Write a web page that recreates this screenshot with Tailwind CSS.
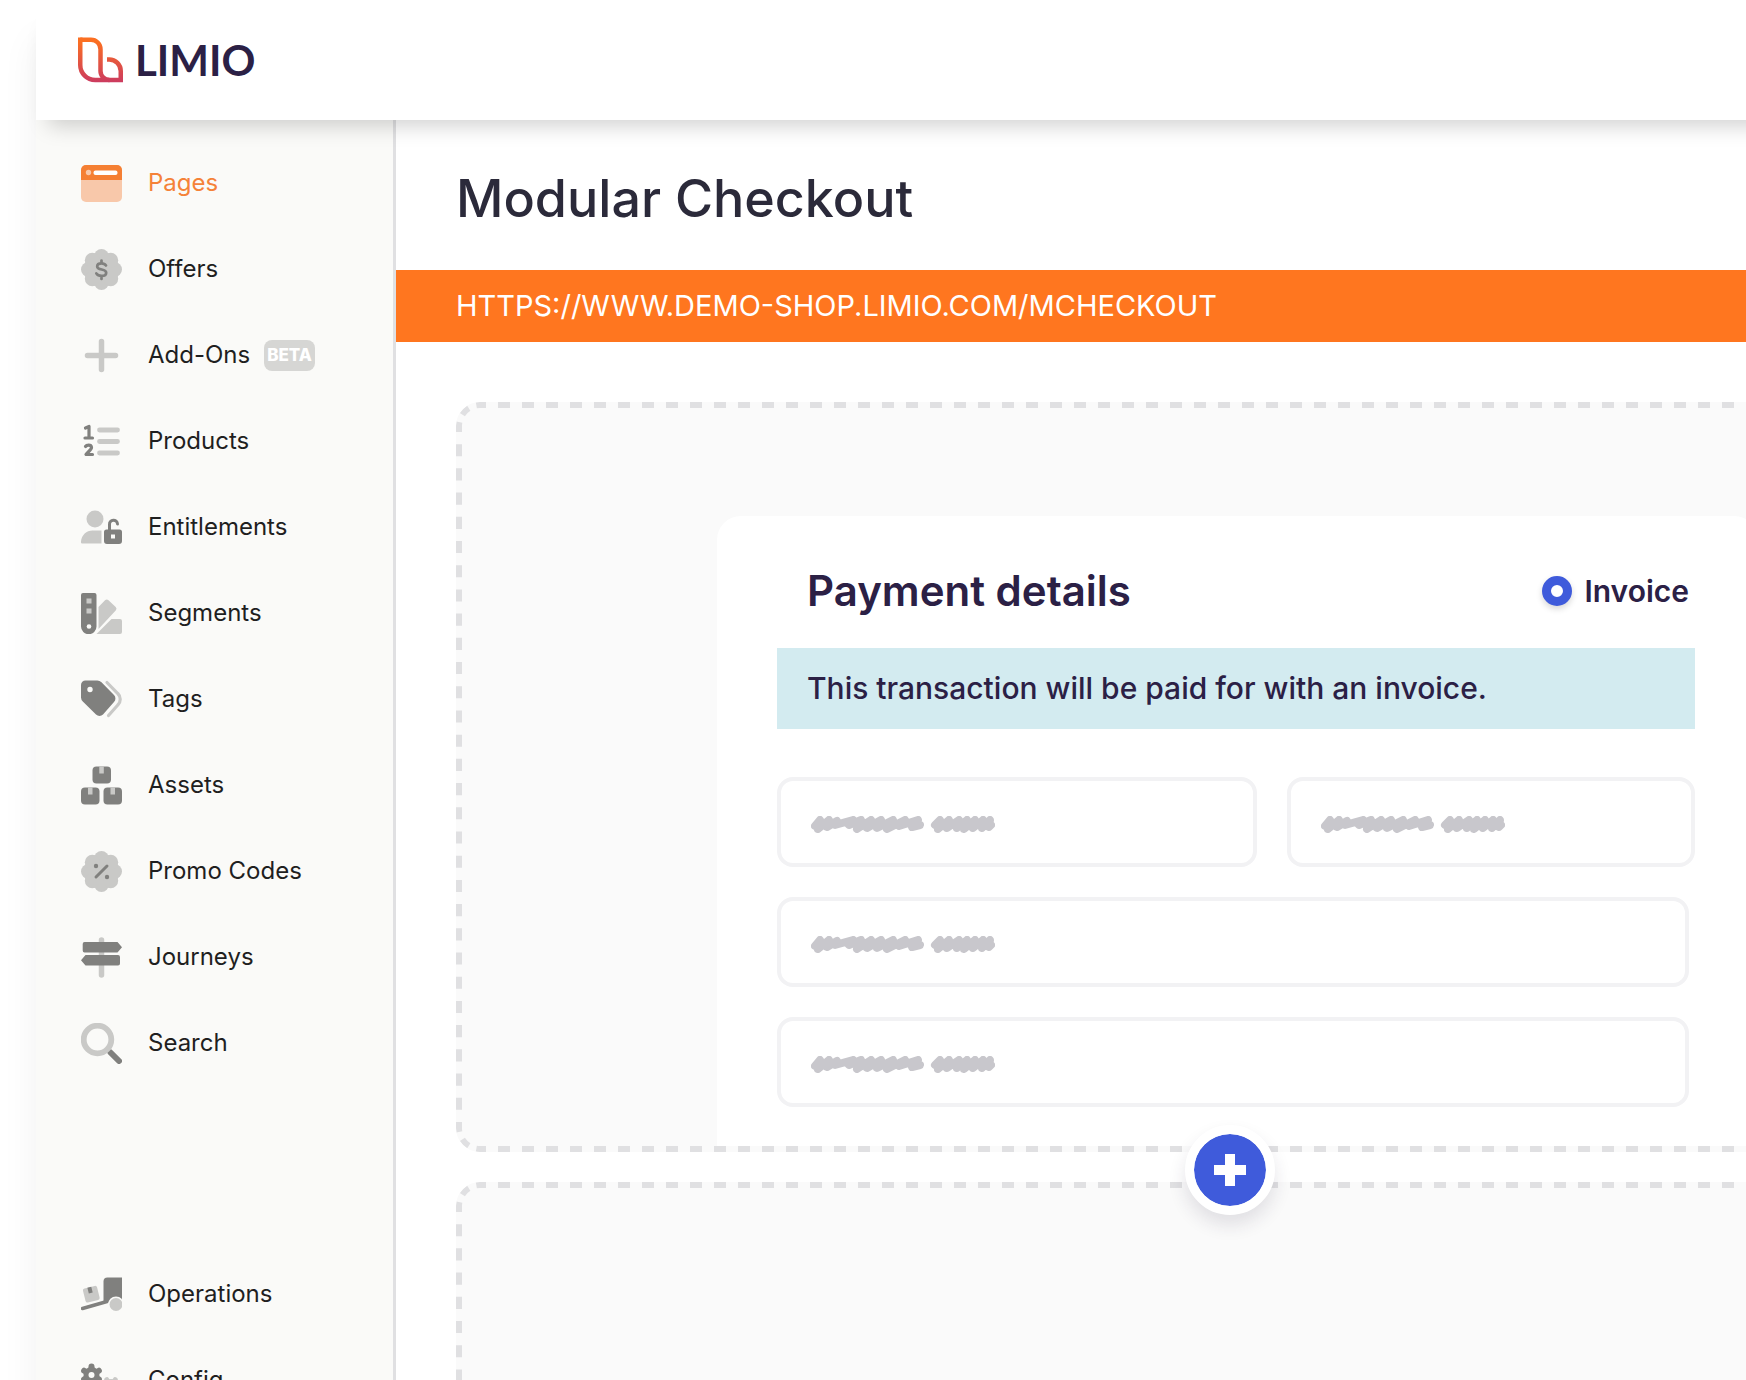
<!DOCTYPE html>
<html lang="en">
<head>
<meta charset="utf-8">
<title>Limio – Modular Checkout</title>
<script src="https://cdn.jsdelivr.net/npm/@tailwindcss/browser@4"></script>
</head>
<body class="bg-white font-[Inter,sans-serif]">

<!-- Shared drawings -->
<svg class="hidden" aria-hidden="true">
  <symbol id="scribble" viewBox="0 0 184 17">
    <g fill="none" stroke="#c8c7cc" stroke-width="8" stroke-linecap="round" stroke-linejoin="round">
      <path d="M4 10 9 4 7 13 18 4 16 11 26 5 24 9 42 4 38 9 50 4 46 13 60 4 56 12 70 4 66 12 82 4 76 13 94 4 88 10 107 4 102 8 109 9 101 11"/>
      <path d="M124 9 129 4 127 13 138 4 136 12 148 4 146 12 156 4 153 13 164 4 162 12 172 4 171 12 179 4 178 11 180 9"/>
    </g>
  </symbol>
  <symbol id="seal" viewBox="0 0 41 41">
    <g fill="#c9c9c7"><circle cx="20.500" cy="20.500" r="17.500"/><circle cx="20.500" cy="7.500" r="7.500"/><circle cx="20.500" cy="33.500" r="7.500"/><circle cx="7.500" cy="20.500" r="7.500"/><circle cx="33.500" cy="20.500" r="7.500"/><circle cx="11.300" cy="11.300" r="7.500"/><circle cx="29.700" cy="11.300" r="7.500"/><circle cx="11.300" cy="29.700" r="7.500"/><circle cx="29.700" cy="29.700" r="7.500"/></g>
  </symbol>
</svg>

<div class="h-screen overflow-hidden pl-9">
<div class="flex h-full flex-col shadow-[0_40px_36px_rgba(0,0,0,0.06)]">

  <header class="relative z-20 -mr-10 flex h-[120px] shrink-0 items-center bg-white pl-[42px] shadow-[0_18px_20px_-12px_rgba(0,0,0,0.18)]">
    <a href="#" class="flex items-center gap-3" aria-label="Limio home">
      <svg class="h-[46px] w-[45px]" viewBox="0 0 45 46" fill="none" stroke="url(#lg)" stroke-width="4.500">
        <defs><linearGradient id="lg" gradientUnits="userSpaceOnUse" x1="0" y1="0" x2="0" y2="46"><stop offset=".1" stop-color="#fb6f22"/><stop offset="1" stop-color="#cb3a60"/></linearGradient></defs>
        <path d="M2.250 2.750H13a9.500 9.500 0 0 1 9.500 9.500V34a9 9 0 0 0 9 9"/>
        <path d="M2.250 .5V28a15 15 0 0 0 15 15H42.750V34a11.500 11.500 0 0 0-11.500-11.500H29"/>
      </svg>
      <span class="font-[Lato,sans-serif] text-[42px] leading-[46px] font-bold text-[#2b2045]">LIMIO</span>
    </a>
  </header>

  <div class="flex min-h-0 flex-1">

    <nav class="w-[360px] shrink-0 overflow-hidden border-r-[3px] border-[#e0e0e2] bg-[#fafaf8] pt-5 text-[24px] leading-8 text-[#1f1f1f]">
      <ul>
        <li><a href="#" aria-current="page" class="flex h-[86px] items-center gap-[26px] pl-[45px] text-[#f58238]">
          <svg class="size-[41px]" viewBox="0 0 41 41"><rect y="2" width="41" height="37" rx="5" fill="#f8c8aa"/><path d="M0 17V7a5 5 0 0 1 5-5H36a5 5 0 0 1 5 5V17Z" fill="#f57f33"/><circle cx="7.500" cy="9.500" r="2.700" fill="#f8c8aa"/><rect x="12.500" y="7.500" width="24" height="4.500" rx="2" fill="#fff"/></svg>
          Pages</a></li>
        <li><a href="#" class="flex h-[86px] items-center gap-[26px] pl-[45px]">
          <svg class="size-[41px]" viewBox="0 0 41 41"><use href="#seal"/><path d="M25 16.500c-1-1.500-2.600-2.200-4.500-2.200-2.600 0-4.300 1.200-4.300 3.100 0 4.300 9 2 9 6.300 0 2-1.900 3.200-4.700 3.200-2.200 0-4.200-.8-5.200-2.500M20.500 11.500v3M20.500 27v3" fill="none" stroke="#80807e" stroke-width="2.700" stroke-linecap="round"/></svg>
          Offers</a></li>
        <li><a href="#" class="flex h-[86px] items-center gap-[26px] pl-[45px]">
          <svg class="size-[41px]" viewBox="0 0 41 41"><path d="M20.500 6.500v28M6.500 20.500h28" stroke="#c9c9c7" stroke-width="5.500" stroke-linecap="round"/></svg>
          Add-Ons
          <span class="-ml-3 rounded-lg bg-[#d6d6d4] px-[3px] text-[17px] leading-[31px] font-extrabold text-white">BETA</span></a></li>
        <li><a href="#" class="flex h-[86px] items-center gap-[26px] pl-[45px]">
          <svg class="size-[41px]" viewBox="0 0 41 41"><path d="M18.500 9H36.500M18.500 20.500H36.500M18.500 32H36.500" stroke="#c9c9c7" stroke-width="4.800" stroke-linecap="round"/><path d="M4.500 7 8 5.500V17M4 17h7.500M4.500 25.500c1-1.500 5.500-2.300 6 .8.200 2.200-3.500 4.500-5.500 7.200h6.500" fill="none" stroke="#80807e" stroke-width="3.200" stroke-linecap="round" stroke-linejoin="round"/></svg>
          Products</a></li>
        <li><a href="#" class="flex h-[86px] items-center gap-[26px] pl-[45px]">
          <svg class="size-[41px]" viewBox="0 0 41 41"><circle cx="14" cy="12" r="8.500" fill="#c9c9c7"/><path d="M0 34.500C.5 28 5.500 23.500 11.500 23.500H20.500V36.500H1.500A1.500 1.500 0 0 1 0 34.500Z" fill="#c9c9c7"/><path d="M28.500 24V17.500a4 4 0 0 1 8-.5" fill="none" stroke="#80807e" stroke-width="3" stroke-linecap="round"/><path fill-rule="evenodd" d="M25.500 22.500H38.500A2.500 2.500 0 0 1 41 25v9a3 3 0 0 1-3 3H26a3 3 0 0 1-3-3V25a2.500 2.500 0 0 1 2.500-2.500ZM30 27.500v4h4v-4Z" fill="#80807e"/></svg>
          Entitlements</a></li>
        <li><a href="#" class="flex h-[86px] items-center gap-[26px] pl-[45px]">
          <svg class="size-[41px]" viewBox="0 0 41 41"><path d="M17.500 36V14L24 7.300a2.500 2.500 0 0 1 3.500 0L34.700 14a2.500 2.500 0 0 1 0 3.500Z" fill="#c9c9c7"/><path d="M15.500 41 30.500 26H39a2 2 0 0 1 2 2V39a2 2 0 0 1-2 2Z" fill="#c9c9c7"/><path d="M2 0H13.500a2 2 0 0 1 2 2V33.500a7.700 7.700 0 0 1-15.500 0V2A2 2 0 0 1 2 0Z" fill="#80807e"/><path d="M5.500 5.500h5v5h-5ZM5.500 15.500h5v5h-5Z" fill="#c9c9c7"/><circle cx="8" cy="33.500" r="2.300" fill="#fafaf8"/></svg>
          Segments</a></li>
        <li><a href="#" class="flex h-[86px] items-center gap-[26px] pl-[45px]">
          <svg class="size-[41px]" viewBox="0 0 41 41"><path d="M26 3.500 36.800 14.500a8 8 0 0 1 0 11.500L27.500 36.500" fill="none" stroke="#c9c9c7" stroke-width="3.200" stroke-linecap="round"/><path fill-rule="evenodd" d="M0 6A4.500 4.500 0 0 1 4.500 1.500H16a6 6 0 0 1 4.500 1.800L33 16a5 5 0 0 1 0 7L22 35.500a5 5 0 0 1-7 0L1.800 22.500A6 6 0 0 1 0 18ZM9 7.800a2.700 2.700 0 1 0 0 5.400 2.700 2.700 0 0 0 0-5.400Z" fill="#80807e"/></svg>
          Tags</a></li>
        <li><a href="#" class="flex h-[86px] items-center gap-[26px] pl-[45px]">
          <svg class="size-[41px]" viewBox="0 0 41 41"><g fill="#80807e"><rect x="11.500" y="1.500" width="18.500" height="17" rx="4"/><rect y="22.500" width="18.500" height="17" rx="4"/><rect x="22.500" y="22.500" width="18.500" height="17" rx="4"/></g><path d="M18.300 1.500h4.500v7h-4.500ZM7 22.500h4.500v7H7ZM29.500 22.500H34v7h-4.500Z" fill="#c9c9c7"/></svg>
          Assets</a></li>
        <li><a href="#" class="flex h-[86px] items-center gap-[26px] pl-[45px]">
          <svg class="size-[41px]" viewBox="0 0 41 41"><use href="#seal"/><path d="M15 26 26 15" stroke="#80807e" stroke-width="3" stroke-linecap="round"/><g fill="#80807e"><circle cx="15" cy="15" r="2.200"/><circle cx="26" cy="26" r="2.200"/></g></svg>
          Promo Codes</a></li>
        <li><a href="#" class="flex h-[86px] items-center gap-[26px] pl-[45px]">
          <svg class="size-[41px]" viewBox="0 0 41 41"><path d="M20.500 3v35" stroke="#c9c9c7" stroke-width="5.500" stroke-linecap="round"/><path d="M3.500 5H36.500L41 10.200 36.500 15.500H3.500A2 2 0 0 1 1.700 13.500V7A2 2 0 0 1 3.500 5ZM37 18H4.500L0 23.200 4.500 28.500H37A2 2 0 0 0 39 26.500V20A2 2 0 0 0 37 18Z" fill="#80807e"/></svg>
          Journeys</a></li>
        <li><a href="#" class="flex h-[86px] items-center gap-[26px] pl-[45px]">
          <svg class="size-[41px]" viewBox="0 0 41 41"><path d="M29.500 29.500 38 38" stroke="#80807e" stroke-width="6" stroke-linecap="round"/><circle cx="16.500" cy="16.500" r="13.800" fill="none" stroke="#c9c9c7" stroke-width="5.800"/></svg>
          Search</a></li>
      </ul>
      <ul class="mt-[165px]">
        <li><a href="#" class="flex h-[86px] items-center gap-[26px] pl-[45px]">
          <svg class="size-[41px]" viewBox="0 0 41 41"><path d="M1.500 34.500 26 27.500" stroke="#80807e" stroke-width="3.500" stroke-linecap="round"/><path d="M22.500 28V7.500a4 4 0 0 1 4-4H41V28Z" fill="#80807e"/><circle cx="35" cy="30.500" r="8" fill="#fafaf8"/><circle cx="35" cy="30.500" r="6.500" fill="#c9c9c7"/><g transform="rotate(-14 10 20)"><rect x="3" y="13" width="14.500" height="14.500" rx="2" fill="#c9c9c7"/><path d="M8 13h4v6H8Z" fill="#80807e"/></g></svg>
          Operations</a></li>
        <li><a href="#" class="flex h-[86px] items-center gap-[26px] pl-[45px]">
          <svg class="size-[41px]" viewBox="0 0 41 41"><g transform="translate(10.500 15)"><g stroke="#80807e" stroke-width="6" stroke-linecap="round"><path d="M0-8.500V8.500"/><path d="M0-8.500V8.500" transform="rotate(60)"/><path d="M0-8.500V8.500" transform="rotate(120)"/></g><circle r="8" fill="#80807e"/><circle r="3" fill="#fafaf8"/></g><g transform="translate(30 27)"><g stroke="#c9c9c7" stroke-width="5" stroke-linecap="round"><path d="M0-8.500V8.500" transform="rotate(30)"/><path d="M0-8.500V8.500" transform="rotate(90)"/><path d="M0-8.500V8.500" transform="rotate(150)"/></g><circle r="8" fill="#c9c9c7"/><circle r="3" fill="#fafaf8"/></g></svg>
          Config</a></li>
      </ul>
    </nav>

    <main class="min-w-0 flex-1 overflow-hidden bg-white">
      <h1 class="pt-[47px] pb-[39px] pl-[60px] text-[52px] leading-16 font-medium text-[#2b2a3a]">Modular Checkout</h1>
      <a href="#" class="block bg-[#ff761f] pl-[60px] text-[29px] leading-[72px] text-white">HTTPS://WWW.DEMO-SHOP.LIMIO.COM/MCHECKOUT</a>

      <!-- The canvas is wider than the visible area and runs off to the right -->
      <div class="-mr-[258px] pt-[60px] pl-[60px]">
        <section class="relative h-[750px] overflow-hidden rounded-3xl bg-[#fafafa] pt-[114px] pr-[246px] pb-[6px] pl-[261px]">
          <svg class="pointer-events-none absolute inset-0 size-full" fill="none" stroke="#e0e0e2" stroke-width="6" aria-hidden="true">
            <path d="M3 24A21 21 0 0 1 24 3" stroke-dasharray="4 8 9 8 4"/>
            <line x1="24" y1="3" x2="100%" y2="3" stroke-dasharray="12" stroke-dashoffset="6"/>
            <svg y="24" class="h-[calc(100%-48px)] w-full"><line x1="3" x2="3" y1="0" y2="100%" pathLength="58" stroke-dasharray="1" stroke-dashoffset=".5"/></svg>
            <svg y="100%" class="overflow-visible"><path d="M3-24A21 21 0 0 0 24-3" stroke-dasharray="4 8 9 8 4"/><line x1="24" y1="-3" x2="100%" y2="-3" stroke-dasharray="12" stroke-dashoffset="6"/></svg>
          </svg>

          <form class="h-full rounded-t-3xl bg-white pt-12 pr-[63px] pl-[60px]">
            <div class="flex items-center justify-between pr-[6px] pb-[30px] pl-[30px]">
              <h2 class="text-[42px] leading-[54px] font-semibold text-[#2b2045]">Payment details</h2>
              <label class="flex items-center gap-3 text-[30px] leading-10 font-semibold text-[#2b2045]">
                <input type="radio" name="method" checked class="size-[30px] appearance-none rounded-full border-[9px] border-[#3f5bdb] bg-white shadow-[0_3px_6px_rgba(0,0,0,0.16)]">
                Invoice
              </label>
            </div>
            <p class="bg-[#d3ebf0] pl-[30px] text-[30px] leading-[81px] font-medium text-[#2b2045]">This transaction will be paid for with an invoice.</p>
            <div class="mt-12 grid grid-cols-[minmax(0,480fr)_minmax(0,408fr)] gap-[30px]">
              <label class="flex h-[90px] items-center rounded-2xl border-4 border-[#f2f2f4] pt-1 pl-[30px]">
                <svg class="h-[17px] w-[184px] shrink-0"><use href="#scribble"/></svg>
                <input type="text" aria-label="First name" class="w-0 flex-1 bg-transparent outline-none">
              </label>
              <label class="flex h-[90px] items-center rounded-2xl border-4 border-[#f2f2f4] pt-1 pl-[30px]">
                <svg class="h-[17px] w-[184px] shrink-0"><use href="#scribble"/></svg>
                <input type="text" aria-label="Last name" class="w-0 flex-1 bg-transparent outline-none">
              </label>
              <label class="col-span-2 mr-[6px] flex h-[90px] items-center rounded-2xl border-4 border-[#f2f2f4] pt-1 pl-[30px]">
                <svg class="h-[17px] w-[184px] shrink-0"><use href="#scribble"/></svg>
                <input type="text" aria-label="Company" class="w-0 flex-1 bg-transparent outline-none">
              </label>
              <label class="col-span-2 mr-[6px] flex h-[90px] items-center rounded-2xl border-4 border-[#f2f2f4] pt-1 pl-[30px]">
                <svg class="h-[17px] w-[184px] shrink-0"><use href="#scribble"/></svg>
                <input type="text" aria-label="Billing address" class="w-0 flex-1 bg-transparent outline-none">
              </label>
            </div>
          </form>
        </section>

        <div class="relative z-10 flex h-[30px] items-center justify-center pt-[6px]">
          <button type="button" aria-label="Add section" class="flex size-[90px] shrink-0 items-center justify-center rounded-full border-[9px] border-white bg-[#3f5bdb] bg-clip-padding shadow-[0_10px_18px_rgba(43,32,69,0.12)]">
            <svg class="size-8" viewBox="0 0 32 32"><path d="M16 0v32M0 16h32" stroke="#fff" stroke-width="10"/></svg>
          </button>
        </div>

        <section class="relative h-[750px] overflow-hidden rounded-3xl bg-[#fafafa]">
          <svg class="pointer-events-none absolute inset-0 size-full" fill="none" stroke="#e0e0e2" stroke-width="6" aria-hidden="true">
            <path d="M3 24A21 21 0 0 1 24 3" stroke-dasharray="4 8 9 8 4"/>
            <line x1="24" y1="3" x2="100%" y2="3" stroke-dasharray="12" stroke-dashoffset="6"/>
            <svg y="24" class="h-[calc(100%-48px)] w-full"><line x1="3" x2="3" y1="0" y2="100%" pathLength="58" stroke-dasharray="1" stroke-dashoffset=".5"/></svg>
          </svg>
        </section>
      </div>
    </main>
  </div>
</div>
</div>
</body>
</html>
